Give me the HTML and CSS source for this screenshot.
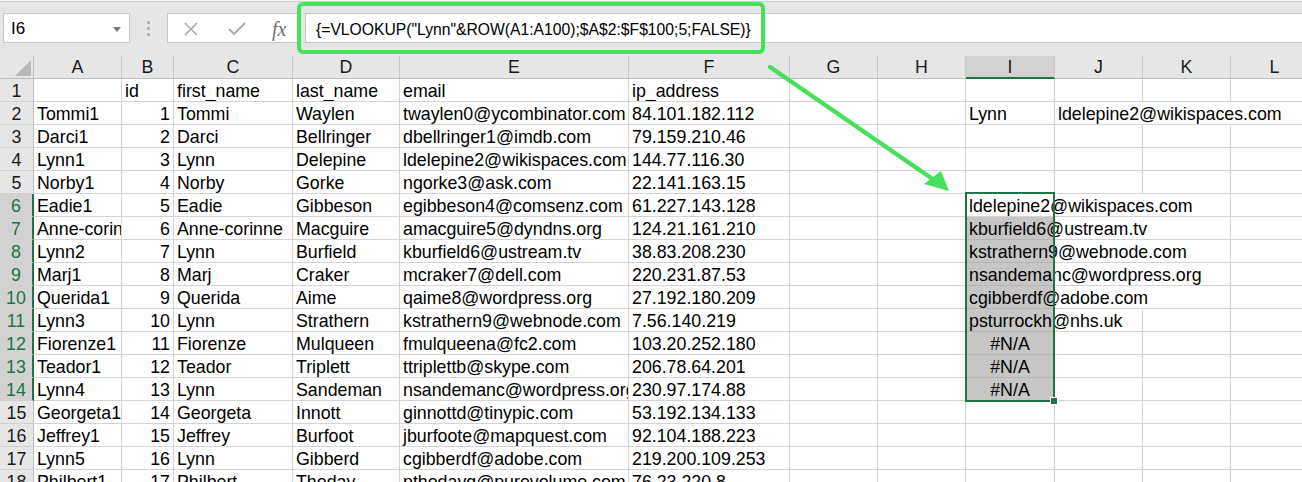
FILE: index.html
```html
<!DOCTYPE html>
<html lang="en">

<head>
    <meta charset="UTF-8">
    <title>VLOOKUP</title>
    <link rel="stylesheet" href="styles.css">
</head>

<body>
    <div class="topbar">
        <div class="namebox">I6<span class="caret"></span></div>
        <div class="grip"><span></span><span></span><span></span></div>
        <div class="fbtns">
            <svg class="ico" width="16" height="14" viewBox="0 0 16 14"><path d="M2 1L14 13M14 1L2 13" stroke="#a9a9a9" stroke-width="1.6" fill="none"/></svg>
            <svg class="ico" width="18" height="14" viewBox="0 0 18 14"><path d="M1 7L6 12L17 1" stroke="#a9a9a9" stroke-width="1.8" fill="none"/></svg>
            <span class="fx">fx</span>
        </div>
        <div class="finput">{=VLOOKUP("Lynn"&amp;ROW(A1:A100);$A$2:$F$100;5;FALSE)}</div>
    </div>

    <div class="sheet">
        <div class="corner"><span></span></div>
        <div class="ch">A</div><div class="ch">B</div><div class="ch">C</div><div class="ch">D</div><div class="ch">E</div><div class="ch">F</div>
        <div class="ch">G</div><div class="ch">H</div><div class="ch sel">I</div><div class="ch">J</div><div class="ch">K</div><div class="ch">L</div>

        <div class="rh">1</div><div class="c"></div><div class="c">id</div><div class="c">first_name</div><div class="c">last_name</div><div class="c">email</div><div class="c">ip_address</div>
        <div class="c"></div><div class="c"></div><div class="c"></div><div class="c"></div><div class="c"></div><div class="c"></div>

        <div class="rh">2</div><div class="c">Tommi1</div><div class="c n">1</div><div class="c">Tommi</div><div class="c">Waylen</div><div class="c">twaylen0@ycombinator.com</div><div class="c">84.101.182.112</div>
        <div class="c"></div><div class="c"></div><div class="c">Lynn</div><div class="c spill nob">ldelepine2@wikispaces.com</div><div class="c nob"></div><div class="c"></div>

        <div class="rh">3</div><div class="c">Darci1</div><div class="c n">2</div><div class="c">Darci</div><div class="c">Bellringer</div><div class="c">dbellringer1@imdb.com</div><div class="c">79.159.210.46</div>
        <div class="c"></div><div class="c"></div><div class="c"></div><div class="c"></div><div class="c"></div><div class="c"></div>

        <div class="rh">4</div><div class="c">Lynn1</div><div class="c n">3</div><div class="c">Lynn</div><div class="c">Delepine</div><div class="c">ldelepine2@wikispaces.com</div><div class="c">144.77.116.30</div>
        <div class="c"></div><div class="c"></div><div class="c"></div><div class="c"></div><div class="c"></div><div class="c"></div>

        <div class="rh">5</div><div class="c">Norby1</div><div class="c n">4</div><div class="c">Norby</div><div class="c">Gorke</div><div class="c">ngorke3@ask.com</div><div class="c">22.141.163.15</div>
        <div class="c"></div><div class="c"></div><div class="c"></div><div class="c"></div><div class="c"></div><div class="c"></div>

        <div class="rh sel">6</div><div class="c">Eadie1</div><div class="c n">5</div><div class="c">Eadie</div><div class="c">Gibbeson</div><div class="c">egibbeson4@comsenz.com</div><div class="c">61.227.143.128</div>
        <div class="c"></div><div class="c"></div><div class="c act spill">ldelepine2@wikispaces.com</div><div class="c nob"></div><div class="c"></div><div class="c"></div>

        <div class="rh sel">7</div><div class="c">Anne-corinne1</div><div class="c n">6</div><div class="c">Anne-corinne</div><div class="c">Macguire</div><div class="c">amacguire5@dyndns.org</div><div class="c">124.21.161.210</div>
        <div class="c"></div><div class="c"></div><div class="c hl spill">kburfield6@ustream.tv</div><div class="c nob"></div><div class="c"></div><div class="c"></div>

        <div class="rh sel">8</div><div class="c">Lynn2</div><div class="c n">7</div><div class="c">Lynn</div><div class="c">Burfield</div><div class="c">kburfield6@ustream.tv</div><div class="c">38.83.208.230</div>
        <div class="c"></div><div class="c"></div><div class="c hl spill">kstrathern9@webnode.com</div><div class="c nob"></div><div class="c"></div><div class="c"></div>

        <div class="rh sel">9</div><div class="c">Marj1</div><div class="c n">8</div><div class="c">Marj</div><div class="c">Craker</div><div class="c">mcraker7@dell.com</div><div class="c">220.231.87.53</div>
        <div class="c"></div><div class="c"></div><div class="c hl spill">nsandemanc@wordpress.org</div><div class="c nob"></div><div class="c"></div><div class="c"></div>

        <div class="rh sel">10</div><div class="c">Querida1</div><div class="c n">9</div><div class="c">Querida</div><div class="c">Aime</div><div class="c">qaime8@wordpress.org</div><div class="c">27.192.180.209</div>
        <div class="c"></div><div class="c"></div><div class="c hl spill">cgibberdf@adobe.com</div><div class="c nob"></div><div class="c"></div><div class="c"></div>

        <div class="rh sel">11</div><div class="c">Lynn3</div><div class="c n">10</div><div class="c">Lynn</div><div class="c">Strathern</div><div class="c">kstrathern9@webnode.com</div><div class="c">7.56.140.219</div>
        <div class="c"></div><div class="c"></div><div class="c hl spill">psturrockh@nhs.uk</div><div class="c"></div><div class="c"></div><div class="c"></div>

        <div class="rh sel">12</div><div class="c">Fiorenze1</div><div class="c n">11</div><div class="c">Fiorenze</div><div class="c">Mulqueen</div><div class="c">fmulqueena@fc2.com</div><div class="c">103.20.252.180</div>
        <div class="c"></div><div class="c"></div><div class="c hl ctr">#N/A</div><div class="c"></div><div class="c"></div><div class="c"></div>

        <div class="rh sel">13</div><div class="c">Teador1</div><div class="c n">12</div><div class="c">Teador</div><div class="c">Triplett</div><div class="c">ttriplettb@skype.com</div><div class="c">206.78.64.201</div>
        <div class="c"></div><div class="c"></div><div class="c hl ctr">#N/A</div><div class="c"></div><div class="c"></div><div class="c"></div>

        <div class="rh sel">14</div><div class="c">Lynn4</div><div class="c n">13</div><div class="c">Lynn</div><div class="c">Sandeman</div><div class="c">nsandemanc@wordpress.org</div><div class="c">230.97.174.88</div>
        <div class="c"></div><div class="c"></div><div class="c hl ctr">#N/A</div><div class="c"></div><div class="c"></div><div class="c"></div>

        <div class="rh">15</div><div class="c">Georgeta1</div><div class="c n">14</div><div class="c">Georgeta</div><div class="c">Innott</div><div class="c">ginnottd@tinypic.com</div><div class="c">53.192.134.133</div>
        <div class="c"></div><div class="c"></div><div class="c"></div><div class="c"></div><div class="c"></div><div class="c"></div>

        <div class="rh">16</div><div class="c">Jeffrey1</div><div class="c n">15</div><div class="c">Jeffrey</div><div class="c">Burfoot</div><div class="c">jburfoote@mapquest.com</div><div class="c">92.104.188.223</div>
        <div class="c"></div><div class="c"></div><div class="c"></div><div class="c"></div><div class="c"></div><div class="c"></div>

        <div class="rh">17</div><div class="c">Lynn5</div><div class="c n">16</div><div class="c">Lynn</div><div class="c">Gibberd</div><div class="c">cgibberdf@adobe.com</div><div class="c">219.200.109.253</div>
        <div class="c"></div><div class="c"></div><div class="c"></div><div class="c"></div><div class="c"></div><div class="c"></div>

        <div class="rh">18</div><div class="c">Philbert1</div><div class="c n">17</div><div class="c">Philbert</div><div class="c">Thoday</div><div class="c">pthodayg@purevolume.com</div><div class="c">76.23.220.8</div>
        <div class="c"></div><div class="c"></div><div class="c"></div><div class="c"></div><div class="c"></div><div class="c"></div>

        <!-- selected range I6:I14 -->
        <div class="selection"><span class="handle"></span></div>
    </div>

    <!-- annotation -->
    <div class="callout"></div>
    <svg class="arrow" width="1302" height="482" viewBox="0 0 1302 482">
        <line x1="770" y1="67" x2="934" y2="180" stroke="#47e05b" stroke-width="4.5" stroke-linecap="round"/>
        <polygon points="949,191 924,184 941,171" fill="#47e05b"/>
    </svg>
</body>

</html>
```
FILE: styles.css
```css
body {
    margin: 0;
    width: 1302px;
    height: 482px;
    overflow: hidden;
    position: relative;
    background: #fff;
    font-family: "Liberation Sans", Arial, sans-serif;
    color: #000;
}

/* formula bar */
.topbar {
    height: 56px;
    display: flex;
    align-items: center;
    background: linear-gradient(#f2f2f2 0 1px, #d0d0d0 1px 2px, #e6e6e6 2px);
}

.namebox {
    margin-left: 3px;
    width: 127px;
    height: 30px;
    box-sizing: border-box;
    background: #fff;
    border: 1px solid #c6c6c6;
    display: flex;
    align-items: center;
    padding-left: 7px;
    padding-top: 2px;
    font-size: 17px;
}

.namebox .caret {
    margin-left: auto;
    margin-right: 8px;
    border-left: 4px solid transparent;
    border-right: 4px solid transparent;
    border-top: 5px solid #7a7a7a;
}

.grip {
    margin-left: 17px;
    display: flex;
    flex-direction: column;
    gap: 3px;
}

.grip span {
    width: 3px;
    height: 3px;
    background: #b3b3b3;
}

.fbtns {
    margin-left: 17px;
    width: 134px;
    height: 30px;
    box-sizing: border-box;
    background: #fff;
    border: 1px solid #c6c6c6;
    display: flex;
    align-items: center;
    padding-top: 2px;
}

.fbtns .ico:first-child {
    margin-left: 15px;
}

.fbtns .ico + .ico {
    margin-left: 29px;
}

.fx {
    margin-left: 26px;
    font-family: "Liberation Serif", serif;
    font-style: italic;
    font-size: 20px;
    color: #6f6f6f;
}

.finput {
    margin-left: 4px;
    flex: 1;
    height: 30px;
    box-sizing: border-box;
    background: #fff;
    border: 1px solid #c6c6c6;
    border-right: none;
    padding-left: 10px;
    font-size: 15.7px;
    line-height: 32px;
    white-space: nowrap;
}

/* grid */
.sheet {
    position: relative;
    display: grid;
    grid-template-columns: 34px 88px 52px 119px 107px 229px 161px 88px 88px 89px 88px 88px 88px;
    grid-auto-rows: 23px;
    font-size: 17.8px;
    line-height: 24px;
}

.sheet > div {
    box-sizing: border-box;
}

.corner {
    background: #e6e6e6;
    border-right: 1px solid #bdbdbd;
    border-bottom: 1px solid #bdbdbd;
    position: relative;
}

.corner span {
    position: absolute;
    right: 2px;
    bottom: 2px;
    width: 0;
    height: 0;
    border-left: 16px solid transparent;
    border-bottom: 16px solid #b8b8b8;
}

.ch {
    background: #e6e6e6;
    border-right: 1px solid #c8c8c8;
    border-bottom: 1px solid #bdbdbd;
    text-align: center;
    color: #1a1a1a;
    line-height: 22px;
}

.ch.sel {
    background: #d2d2d2;
    border-bottom: 2px solid #217346;
}

.rh {
    background: #e6e6e6;
    border-right: 1px solid #bdbdbd;
    border-bottom: 1px solid #d0d0d0;
    text-align: center;
    color: #1a1a1a;
    overflow: hidden;
}

.rh.sel {
    background: #d2d2d2;
    color: #217346;
    border-right: 2px solid #217346;
}

.c {
    border-right: 1px solid #d4d4d4;
    border-bottom: 1px solid #d4d4d4;
    padding: 0 3px 0 3px;
    white-space: nowrap;
    overflow: hidden;
}

.c.n {
    text-align: right;
}

.c.ctr {
    text-align: center;
}

.c.spill {
    overflow: visible;
}

.c.nob {
    border-right-color: transparent;
}

.c.hl {
    background: #c6c6c6;
    border-bottom-color: #b5b5b5;
}

.c.act {
    background: #fff;
}

.selection {
    position: absolute;
    left: 965px;
    top: 136px;
    width: 90px;
    height: 210px;
    box-sizing: border-box;
    border: 2px solid #217346;
}

.selection .handle {
    position: absolute;
    right: -5px;
    bottom: -5px;
    width: 6px;
    height: 6px;
    background: #217346;
    border: 1px solid #fff;
}

/* annotation */
.callout {
    position: absolute;
    left: 297px;
    top: 2px;
    width: 468px;
    height: 52px;
    box-sizing: border-box;
    border: 4px solid #45e25c;
    border-radius: 6px;
}

.arrow {
    position: absolute;
    left: 0;
    top: 0;
    pointer-events: none;
}
```
